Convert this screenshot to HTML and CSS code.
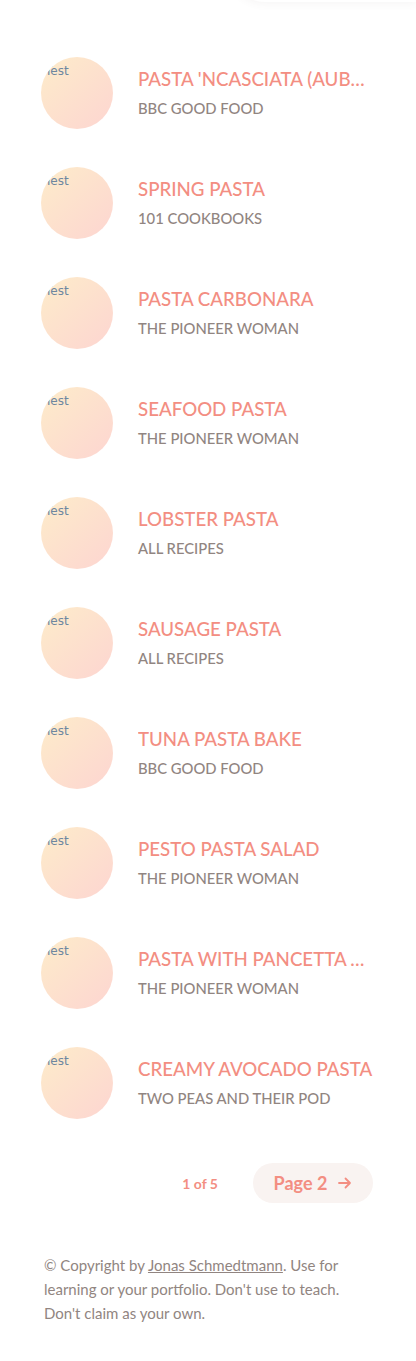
FILE: index.html
```html
<!DOCTYPE html>
<html lang="en">
<head>
<meta charset="utf-8">
<title>Recipes</title>
<link rel="stylesheet" href="styles.css">
</head>
<body>
<div class="top-shadow"></div>
<main class="page">
  <ul class="list">
    <li class="item"><div class="thumb"><span class="alt">Test</span></div><div class="info"><p class="title">Pasta 'Ncasciata (Aubergine Pasta Bake)</p><p class="pub">BBC Good Food</p></div></li>
    <li class="item"><div class="thumb"><span class="alt">Test</span></div><div class="info"><p class="title">Spring Pasta</p><p class="pub">101 Cookbooks</p></div></li>
    <li class="item"><div class="thumb"><span class="alt">Test</span></div><div class="info"><p class="title">Pasta Carbonara</p><p class="pub">The Pioneer Woman</p></div></li>
    <li class="item"><div class="thumb"><span class="alt">Test</span></div><div class="info"><p class="title">Seafood Pasta</p><p class="pub">The Pioneer Woman</p></div></li>
    <li class="item"><div class="thumb"><span class="alt">Test</span></div><div class="info"><p class="title">Lobster Pasta</p><p class="pub">All Recipes</p></div></li>
    <li class="item"><div class="thumb"><span class="alt">Test</span></div><div class="info"><p class="title">Sausage Pasta</p><p class="pub">All Recipes</p></div></li>
    <li class="item"><div class="thumb"><span class="alt">Test</span></div><div class="info"><p class="title">Tuna Pasta Bake</p><p class="pub">BBC Good Food</p></div></li>
    <li class="item"><div class="thumb"><span class="alt">Test</span></div><div class="info"><p class="title">Pesto Pasta Salad</p><p class="pub">The Pioneer Woman</p></div></li>
    <li class="item"><div class="thumb"><span class="alt">Test</span></div><div class="info"><p class="title">Pasta with Pancetta and Peas</p><p class="pub">The Pioneer Woman</p></div></li>
    <li class="item"><div class="thumb"><span class="alt">Test</span></div><div class="info"><p class="title">Creamy Avocado Pasta</p><p class="pub">Two Peas and Their Pod</p></div></li>
  </ul>
  <div class="pagination">
    <span class="count">1 of 5</span>
    <button class="next">Page 2
      <svg class="arrow" viewBox="0 0 16 16" width="16" height="16" aria-hidden="true"><path d="M2 8h11M8.5 3.5L13 8l-4.5 4.5" fill="none" stroke="currentColor" stroke-width="1.8" stroke-linecap="round" stroke-linejoin="round"/></svg>
    </button>
  </div>
  <p class="copyright">© Copyright by <a href="#">Jonas Schmedtmann</a>. Use for learning or your portfolio. Don't use to teach. Don't claim as your own.</p>
</main>
</body>
</html>
```

FILE: styles.css
```css
* { box-sizing: border-box; }
html, body { margin: 0; padding: 0; }
body {
  font-family: Lato, "Open Sans", "Liberation Sans", sans-serif;
  background: #fff;
  color: #615551;
  position: relative;
  overflow: hidden;
}
.top-shadow {
  position: absolute;
  top: -40px;
  right: 0;
  width: 190px;
  height: 42px;
  border-radius: 0 0 0 40px;
  box-shadow: 0 2px 8px rgba(97, 85, 81, 0.06);
}
.page { padding-top: 57px; }
.list {
  list-style: none;
  margin: 0;
  padding: 0 43px 0 41px;
  display: flex;
  flex-direction: column;
  gap: 38px;
}
.item {
  display: flex;
  align-items: center;
  gap: 25px;
}
.thumb {
  flex: 0 0 72px;
  width: 72px;
  height: 72px;
  border-radius: 50%;
  overflow: hidden;
  background: linear-gradient(135deg, #fdecca, #fdd5d1);
  position: relative;
}
.alt {
  position: absolute;
  left: 4px;
  top: 7px;
  font-family: "DejaVu Sans", sans-serif;
  font-size: 12px;
  color: #6d87a0;
}
.info { flex: 1; min-width: 0; padding-bottom: 2px; }
.title {
  margin: 0;
  font-size: 18.7px;
  line-height: 25px;
  font-weight: 500;
  color: #f38e82;
  text-transform: uppercase;
  white-space: nowrap;
  overflow: hidden;
  text-overflow: ellipsis;
}
.pub {
  margin: 6px 0 0;
  font-size: 14.8px;
  line-height: 20px;
  color: #918581;
  text-transform: uppercase;
  font-weight: 500;
}
.pagination {
  display: flex;
  justify-content: flex-end;
  align-items: center;
  gap: 35px;
  padding: 0 43px 0 41px;
  margin-top: 44px;
}
.count {
  font-size: 14px;
  font-weight: 700;
  color: #f38e82;
}
.next {
  display: flex;
  align-items: center;
  gap: 10px;
  height: 40px;
  width: 120px;
  justify-content: center;
  border: none;
  border-radius: 20px;
  background: #f9f3f1;
  color: #f38e82;
  font-family: inherit;
  font-size: 18px;
  font-weight: 700;
  padding: 0 18px 0 19px;
}
.arrow { display: block; }
.copyright {
  margin: 50px 0 0;
  padding: 0 66px 0 44px;
  font-size: 15px;
  line-height: 24px;
  color: #918581;
}
.copyright a { color: #918581; }
```
